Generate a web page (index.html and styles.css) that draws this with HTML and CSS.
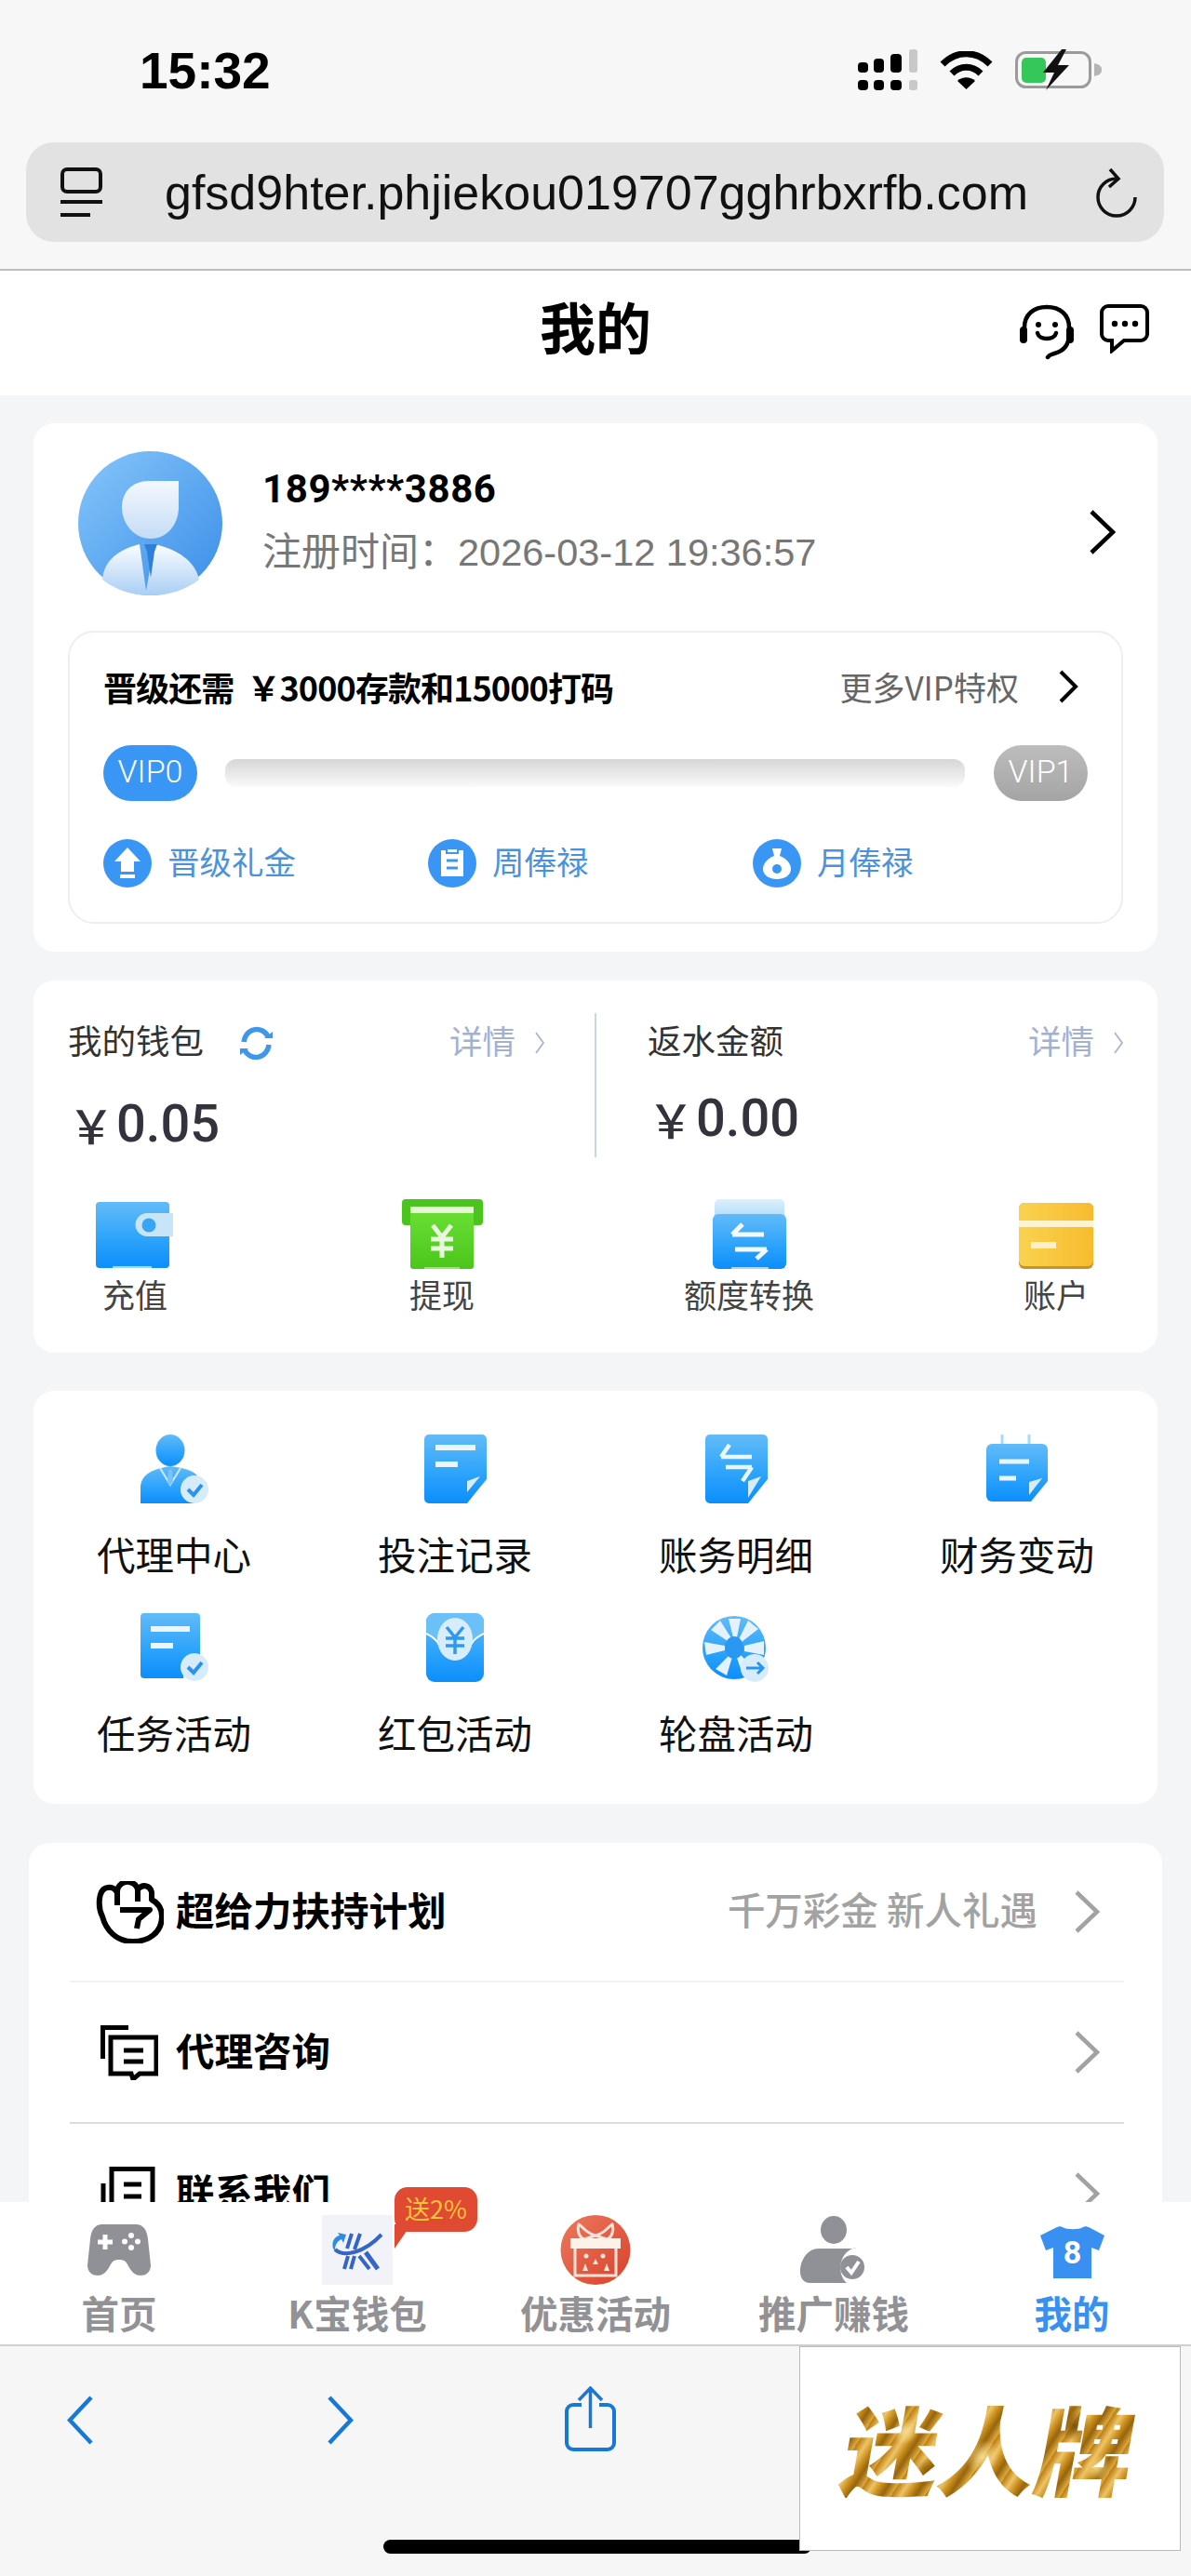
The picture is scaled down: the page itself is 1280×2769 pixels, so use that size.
FILE: index.html
```html
<!DOCTYPE html>
<html lang="zh-CN">
<head>
<meta charset="utf-8">
<title>我的</title>
<link rel="stylesheet" href="styles.css">
</head>
<body>
<svg class="defs" aria-hidden="true"><defs>
<linearGradient id="gBlue" x1="0" y1="0" x2="0" y2="1"><stop offset="0" stop-color="#62bbf8"/><stop offset=".55" stop-color="#2ea4fb"/><stop offset="1" stop-color="#0c8efb"/></linearGradient>
<linearGradient id="gGreen" x1="0" y1="0" x2="0" y2="1"><stop offset="0" stop-color="#68de34"/><stop offset="1" stop-color="#4cc61c"/></linearGradient>
<linearGradient id="gPale" x1="0" y1="0" x2="0" y2="1"><stop offset="0" stop-color="#dcf0fc"/><stop offset="1" stop-color="#a6d8fa"/></linearGradient>
<linearGradient id="gYellow" x1="0" y1="0" x2="1" y2="0"><stop offset="0" stop-color="#fad24f"/><stop offset="1" stop-color="#f7bb2e"/></linearGradient>
<linearGradient id="gAvatar" x1="0" y1="0" x2="1" y2="1"><stop offset="0" stop-color="#86c6fa"/><stop offset="1" stop-color="#3a8de8"/></linearGradient>
<linearGradient id="gHead" x1="0" y1="0" x2="0" y2="1"><stop offset="0" stop-color="#f4f8fd"/><stop offset="1" stop-color="#c4dcf6"/></linearGradient>
<linearGradient id="gBody" x1="0" y1="0" x2="0" y2="1"><stop offset="0" stop-color="#fbfdff"/><stop offset="1" stop-color="#a9cef5"/></linearGradient>
<linearGradient id="gGift" x1="0" y1="0" x2="1" y2="1"><stop offset="0" stop-color="#ec7a5e"/><stop offset="1" stop-color="#d8412b"/></linearGradient>
</defs></svg>

<header class="chrome">
  <div class="status">
    <span class="time">15:32</span>
    <div class="status-icons">
      <svg class="signal" width="64" height="45" viewBox="0 0 64 45"><g fill="#000"><rect x="0" y="14" width="11" height="11" rx="4"/><rect x="17" y="10" width="11" height="15" rx="4"/><rect x="35" y="5" width="12" height="20" rx="4"/><rect x="0" y="33" width="11" height="11" rx="4"/><rect x="17" y="33" width="11" height="11" rx="4"/><rect x="35" y="33" width="12" height="11" rx="4"/></g><g fill="#c8c8c8"><rect x="55" y="0" width="9" height="25" rx="3"/><rect x="55" y="33" width="9" height="11" rx="3"/></g></svg>
      <svg class="wifi" width="57" height="41" viewBox="0 0 57 41"><g fill="none" stroke="#000" stroke-width="7"><path d="M3 14C18 -1 39 -1 54 14"/><path d="M13 24C22 15 35 15 44 24"/></g><path d="M19 32C24 27 33 27 38 32L28.500 41Z" fill="#000"/></svg>
      <svg class="battery" width="93" height="44" viewBox="0 0 93 44"><rect x="1.500" y="3.500" width="79" height="37" rx="10" fill="none" stroke="#9b9b9b" stroke-width="3"/><rect x="7" y="9" width="26" height="27" rx="5" fill="#35c759"/><path d="M85 15c5 1 8 3 8 7s-3 6-8 7z" fill="#b5b5b5"/><path d="M50 0L30 25H42L33 44L58 17H46L55 0Z" fill="#111"/></svg>
    </div>
  </div>
  <div class="urlbar">
    <svg class="url-tabs" width="45" height="53" viewBox="0 0 45 53"><rect x="2" y="2" width="41" height="24" rx="5" fill="none" stroke="#111" stroke-width="4"/><path d="M0 37H45M0 51H32" stroke="#111" stroke-width="4"/></svg>
    <span class="url-text">gfsd9hter.phjiekou019707gghrbxrfb.com</span>
    <svg class="reload" width="44" height="54" viewBox="0 0 44 54"><path d="M22 12A20 20 0 1 0 42 32" fill="none" stroke="#111" stroke-width="3.500"/><path d="M15 2L24 12L14 21" fill="none" stroke="#111" stroke-width="3.500"/></svg>
  </div>
</header>

<main class="scroll">
  <div class="titlebar">
    <h1 class="title">我的</h1>
    <div class="title-icons">
      <svg width="60" height="60" viewBox="0 0 60 60"><g fill="none" stroke="#000" stroke-width="4.500" stroke-linecap="round"><path d="M6 34V25C6 11 16 3 30 3S54 11 54 25V34"/><path d="M54 32C54 42 50 50 38 53C36 54 33 54 31 57"/><path d="M20 31C22 39 38 39 40 31"/></g><rect x="1" y="24" width="8" height="18" rx="4"/><rect x="51" y="24" width="8" height="18" rx="4"/><circle cx="21" cy="22" r="3"/><circle cx="39" cy="22" r="3"/></svg>
      <svg width="53" height="53" viewBox="0 0 53 53"><path d="M9 2H44A7 7 0 0 1 51 9V32A7 7 0 0 1 44 39H26L13 50V39H9A7 7 0 0 1 2 32V9A7 7 0 0 1 9 2Z" fill="none" stroke="#000" stroke-width="4"/><circle cx="16" cy="21" r="3.200"/><circle cx="27" cy="21" r="3.200"/><circle cx="38" cy="21" r="3.200"/></svg>
    </div>
  </div>

  <section class="card card-user">
    <div class="profile">
      <svg class="avatar" width="155" height="155" viewBox="0 0 155 155"><circle cx="77.500" cy="77.500" r="77.500" fill="url(#gAvatar)"/><path d="M108 32V60C108 78 96 94 78 94C60 94 47 78 47 60C47 44 58 32 76 32Z" fill="url(#gHead)"/><path d="M26 138C28 118 42 106 66 100L73 150L82 100C106 105 126 118 130 138C116 149 97 155 78 155C58 155 40 149 26 138Z" fill="url(#gBody)"/><path d="M71 100H85L82 108L78 136L74 108Z" fill="#2f7fd8"/></svg>
      <div class="who">
        <div class="phone">189****3886</div>
        <div class="regtime"><span class="reg-label">注册时间：</span>2026-03-12 19:36:57</div>
      </div>
      <svg class="chev-user" width="29" height="48" viewBox="0 0 29 48"><path d="M3 2L26 24L3 46" fill="none" stroke="#000" stroke-width="4.500"/></svg>
    </div>
    <div class="vip">
      <div class="vip-head">
        <div class="vip-need"><span>晋级还需</span><span class="yen-s">￥</span><span>3000存款和15000打码</span></div>
        <div class="vip-more"><span>更多VIP特权</span><svg width="21" height="36" viewBox="0 0 21 36"><path d="M2 2L18 18L2 34" fill="none" stroke="#000" stroke-width="4"/></svg></div>
      </div>
      <div class="vip-progress">
        <span class="pill pill-on">VIP0</span>
        <div class="bar"></div>
        <span class="pill pill-off">VIP1</span>
      </div>
      <div class="vip-links">
        <div class="vip-link"><svg width="52" height="52" viewBox="0 0 52 52"><circle cx="26" cy="26" r="26" fill="#3a96f5"/><path d="M26 9L40 24H33V35H19V24H12Z" fill="#fff"/><rect x="18" y="38" width="16" height="4" fill="#fff"/></svg><span>晋级礼金</span></div>
        <div class="vip-link"><svg width="52" height="52" viewBox="0 0 52 52"><circle cx="26" cy="26" r="26" fill="#3a96f5"/><path d="M14 12H38V40H14Z" fill="#fff"/><path d="M20 10H32V15H20Z" fill="#fff" stroke="#3a96f5" stroke-width="2"/><path d="M20 23H32M20 31H32" stroke="#3a96f5" stroke-width="3"/></svg><span>周俸禄</span></div>
        <div class="vip-link"><svg width="52" height="52" viewBox="0 0 52 52"><circle cx="26" cy="26" r="26" fill="#3a96f5"/><path d="M21 10H31L29 18C37 21 41 27 41 32C41 39 34 43 26 43S11 39 11 32C11 27 15 21 23 18Z" fill="#fff"/><circle cx="26" cy="32" r="5" fill="#3a96f5"/></svg><span>月俸禄</span></div>
      </div>
    </div>
  </section>

  <section class="card card-wallet">
    <div class="wallet-top">
      <div class="wallet-col wallet-left">
        <div class="w-head">
          <span class="w-name">我的钱包</span>
          <svg class="w-refresh" width="37" height="37" viewBox="0 0 37 37"><g fill="none" stroke="#3f97ea" stroke-width="5.500"><path d="M5 17A14 15 0 0 1 31 11"/><path d="M32 20A14 15 0 0 1 6 26"/></g><path d="M27 13H36V6Z M10 24H1V31Z" fill="#3f97ea"/></svg>
          <span class="w-detail">详情</span>
          <svg class="w-chev" width="11" height="24" viewBox="0 0 11 24"><path d="M1 1L9 12L1 23" fill="none" stroke="#aab4ce" stroke-width="1.800"/></svg>
        </div>
        <div class="amount"><span class="yen">￥</span><span>0.05</span></div>
      </div>
      <div class="wallet-col wallet-right">
        <div class="w-head">
          <span class="w-name">返水金额</span>
          <span class="w-detail">详情</span>
          <svg class="w-chev" width="11" height="24" viewBox="0 0 11 24"><path d="M1 1L9 12L1 23" fill="none" stroke="#aab4ce" stroke-width="1.800"/></svg>
        </div>
        <div class="amount"><span class="yen">￥</span><span>0.00</span></div>
      </div>
    </div>
    <div class="wallet-actions">
      <div class="w-action">
        <svg width="84" height="75" viewBox="0 0 84 75"><rect x="0" y="3" width="79" height="71" rx="4" fill="url(#gBlue)"/><path d="M18 73H60" stroke="#9ddaff" stroke-width="2"/><path d="M83 15H55A12.500 12.500 0 0 0 55 40H83Z" fill="#c8e4f8"/><circle cx="57" cy="28" r="7.500" fill="#38a4f5"/></svg>
        <span>充值</span>
      </div>
      <div class="w-action">
        <svg width="87" height="75" viewBox="0 0 87 75"><rect x="0" y="0" width="87" height="28" rx="4" fill="#4bc51e"/><rect x="9" y="14" width="68" height="61" rx="3" fill="url(#gGreen)"/><rect x="9" y="8" width="68" height="7" fill="#e6f7d6"/><path d="M33 28L43 41L53 28M31 43H55M31 53H55M43 41V63" fill="none" stroke="#e9f8dc" stroke-width="5"/><path d="M24 74H62" stroke="#8fe868" stroke-width="2"/></svg>
        <span>提现</span>
      </div>
      <div class="w-action">
        <svg width="79" height="75" viewBox="0 0 79 75"><rect x="2" y="0" width="75" height="24" rx="5" fill="url(#gPale)"/><rect x="0" y="16" width="79" height="59" rx="6" fill="url(#gBlue)"/><path d="M21 38H55M21 38L32 27M58 54H24M58 54L47 64" fill="none" stroke="#f2f9ff" stroke-width="5"/><path d="M20 74H60" stroke="#9ddaff" stroke-width="2"/></svg>
        <span>额度转换</span>
      </div>
      <div class="w-action">
        <svg width="80" height="75" viewBox="0 0 80 75"><rect x="0" y="4" width="80" height="71" rx="6" fill="#c4952f"/><rect x="0" y="4" width="80" height="68" rx="6" fill="url(#gYellow)"/><rect x="0" y="23" width="80" height="7" fill="#fdf3cf"/><rect x="13" y="46" width="27" height="7" fill="#fdf0c8"/></svg>
        <span>账户</span>
      </div>
    </div>
  </section>

  <section class="card card-menu">
    <div class="menu-cell">
      <svg width="73" height="74" viewBox="0 0 73 74"><path d="M32 34C14 37 0 42 0 58V74H58A15 15 0 0 1 62 46C58 38 45 36 32 34Z" fill="url(#gBlue)"/><ellipse cx="32" cy="17" rx="15.500" ry="17" fill="url(#gBlue)"/><path d="M21 36L32 54L43 36" fill="none" stroke="#cfe9fb" stroke-width="2"/><path d="M30 38H34L35 50L32 55L29 50Z" fill="#7cc2f7"/><circle cx="58" cy="59" r="15" fill="#d6ecfb"/><path d="M51 59L57 65L66 54" fill="none" stroke="#2a93f0" stroke-width="4"/></svg>
      <span>代理中心</span>
    </div>
    <div class="menu-cell">
      <svg width="67" height="74" viewBox="0 0 67 74"><path d="M5 0H62A5 5 0 0 1 67 5V48L46 74H5A5 5 0 0 1 0 69V5A5 5 0 0 1 5 0Z" fill="url(#gBlue)"/><path d="M12 14H55M12 32H36" stroke="#eaf6fe" stroke-width="6"/><path d="M60 45L46 50V62Z" fill="#d6ecfb"/></svg>
      <span>投注记录</span>
    </div>
    <div class="menu-cell">
      <svg width="67" height="74" viewBox="0 0 67 74"><path d="M5 0H62A5 5 0 0 1 67 5V48L46 74H5A5 5 0 0 1 0 69V5A5 5 0 0 1 5 0Z" fill="url(#gBlue)"/><path d="M17 24H50M17 24L26 11M50 35H22M50 35L40 50" fill="none" stroke="#eaf6fe" stroke-width="4.500"/><path d="M60 45L46 50V68Z" fill="#d6ecfb"/></svg>
      <span>账务明细</span>
    </div>
    <div class="menu-cell">
      <svg width="66" height="74" viewBox="0 0 66 74"><path d="M17 0V16M46 0V16" stroke="#a7dbfb" stroke-width="3"/><path d="M6 10H60A6 6 0 0 1 66 16V50L48 72H6A6 6 0 0 1 0 66V16A6 6 0 0 1 6 10Z" fill="url(#gBlue)"/><path d="M14 29H46M14 47H32" stroke="#eaf6fe" stroke-width="5"/><path d="M60 47L46 51V65Z" fill="#d6ecfb"/></svg>
      <span>财务变动</span>
    </div>
    <div class="menu-cell">
      <svg width="73" height="74" viewBox="0 0 73 74"><path d="M4 0H60A4 4 0 0 1 64 4V60H46V70H4A4 4 0 0 1 0 66V4A4 4 0 0 1 4 0Z" fill="url(#gBlue)"/><path d="M11 17H53M11 35H35" stroke="#eaf6fe" stroke-width="6"/><circle cx="58" cy="58" r="15" fill="#d6ecfb"/><path d="M51 58L57 64L66 53" fill="none" stroke="#2a93f0" stroke-width="4"/></svg>
      <span>任务活动</span>
    </div>
    <div class="menu-cell">
      <svg width="62" height="74" viewBox="0 0 62 74"><rect x="0" y="0" width="62" height="74" rx="9" fill="url(#gBlue)"/><path d="M0 22C8 26 12 32 16 38H46C50 32 54 26 62 22V9A9 9 0 0 0 53 0H9A9 9 0 0 0 0 9Z" fill="#6cc0f8"/><path d="M0 22C8 26 12 30 14 34M62 22C54 26 50 30 48 34" fill="none" stroke="#fff" stroke-width="2"/><ellipse cx="31" cy="28" rx="19" ry="23" fill="#d8edfb"/><path d="M22 15L31 26L40 15M21 27H41M21 35H41M31 26V44" fill="none" stroke="#2f98f0" stroke-width="3.500"/></svg>
      <span>红包活动</span>
    </div>
    <div class="menu-cell">
      <svg width="72" height="74" viewBox="0 0 72 74"><circle cx="34" cy="37" r="34" fill="url(#gBlue)"/><path d="M28 6H41L37 26H33ZM49 8L60 17L42 31L39 28ZM66 30L66 45L45 41V35ZM55 59L43 66L37 48L41 45ZM26 67L14 60L29 45L32 47ZM4 45L2 31L24 35V40ZM9 18L19 8L31 27L27 30Z" fill="#e3f2fc"/><ellipse cx="34" cy="37" rx="10" ry="12" fill="#2a98f2"/><circle cx="56" cy="59" r="15" fill="#d6ecfb"/><path d="M47 59H65M59 53L65 59L59 65" fill="none" stroke="#2a93f0" stroke-width="3"/></svg>
      <span>轮盘活动</span>
    </div>
  </section>

  <section class="card-list">
    <div class="row row-soft">
      <span class="row-icon"><svg width="73" height="67" viewBox="0 0 73 67"><g fill="none" stroke="#000" stroke-width="6" stroke-linejoin="round"><path d="M7 38C2 28 2 8 13 7C18 6 21 9 23 12C23 4 30 0 36 1C41 2 44 5 45 9C50 3 58 4 60 12L60 20C68 24 71 30 71 38C71 56 56 65 40 65C22 65 11 53 7 38Z"/><path d="M23 12V26M45 9V22"/><path d="M26 31H58L46 41L44 51"/></g></svg></span>
      <span class="row-text">超给力扶持计划</span>
      <span class="row-note">千万彩金 新人礼遇</span>
      <svg class="row-chev" width="27" height="46" viewBox="0 0 27 46"><path d="M2 2L24 23L2 44" fill="none" stroke="#a2a2a2" stroke-width="4.500"/></svg>
    </div>
    <div class="row row-hard">
      <span class="row-icon"><svg width="62" height="59" viewBox="0 0 62 59"><g fill="none" stroke="#000" stroke-width="5"><path d="M30 2.500H2.500V36"/><path d="M11 13H60V52H42L35 58L33 52H11Z"/><path d="M25 27H46M25 39H46"/></g></svg></span>
      <span class="row-text">代理咨询</span>
      <svg class="row-chev" width="27" height="46" viewBox="0 0 27 46"><path d="M2 2L24 23L2 44" fill="none" stroke="#a2a2a2" stroke-width="4.500"/></svg>
    </div>
    <div class="row">
      <span class="row-icon"><svg width="62" height="59" viewBox="0 0 62 59"><g fill="none" stroke="#000" stroke-width="5"><path d="M12 2.500H56V52H12Z"/><path d="M3 18V50H10"/><path d="M25 19H44M25 32H44"/></g></svg></span>
      <span class="row-text">联系我们</span>
      <svg class="row-chev" width="27" height="46" viewBox="0 0 27 46"><path d="M2 2L24 23L2 44" fill="none" stroke="#a2a2a2" stroke-width="4.500"/></svg>
    </div>
  </section>
</main>

<nav class="tabbar">
  <div class="tab">
    <svg width="68" height="75" viewBox="0 0 68 75"><path d="M16 10H52C60 10 64 16 65 26L68 54C68 62 62 65 57 65C51 65 47 61 43 53C41 49 38 48 34 48S27 49 25 53C21 61 17 65 11 65C6 65 0 62 0 54L3 26C4 16 8 10 16 10Z" fill="#909097"/><path d="M19 21V37M11 29H27" stroke="#fff" stroke-width="5"/><g fill="#fff"><circle cx="47" cy="22" r="3"/><circle cx="47" cy="35" r="3"/><circle cx="40" cy="28.500" r="3"/><circle cx="54" cy="28.500" r="3"/></g></svg>
    <span>首页</span>
  </div>
  <div class="tab">
    <svg width="76" height="75" viewBox="0 0 76 75"><rect width="76" height="75" fill="#f2f3f8"/><g fill="none" stroke="#3565c9"><path d="M32 20L27 36M41 20L35 37" stroke-width="4"/><path d="M14 37C24 46 46 40 64 21" stroke-width="4"/><path d="M28 44L24 58M35 44L31 58M40 44L51 58" stroke-width="4"/><path d="M47 40L60 58" stroke-width="5"/></g><path d="M12 36C10 28 14 23 19 22L17 19L26 21L23 30L21 26C17 28 14 31 14 38Z" fill="#2f8be0"/></svg>
    <span>K宝钱包</span>
    <div class="bubble"><span>送2%</span></div>
  </div>
  <div class="tab">
    <svg width="76" height="75" viewBox="0 0 76 75"><circle cx="38" cy="37.500" r="37.500" fill="url(#gGift)"/><g fill="none" stroke="#fbe3da" stroke-width="3"><path d="M38 22C28 20 24 12 20 10C18 16 20 24 26 26Z"/><path d="M38 22C48 20 52 12 56 10C58 16 56 24 50 26Z"/><path d="M16 36V65H60V36"/></g><rect x="11" y="25" width="54" height="11" fill="#fdf1ea"/><g fill="#fbe3da"><circle cx="28" cy="44" r="2.500"/><circle cx="46" cy="44" r="2.500"/><path d="M38 47L41 53H35Z"/><path d="M27 52L30 60H24Z"/><path d="M50 52L53 60H47Z"/></g></svg>
    <span>优惠活动</span>
  </div>
  <div class="tab">
    <svg width="72" height="75" viewBox="0 0 72 75"><ellipse cx="36" cy="16" rx="14" ry="15" fill="#909097"/><path d="M20 36C8 36 0 48 0 61C0 68 4 73 10 73H50C42 66 40 50 50 40C54 36 58 35 60 36C54 36 40 36 20 36Z" fill="#909097"/><circle cx="56" cy="56" r="13" fill="#909097"/><path d="M50 56L55 62L63 50" fill="none" stroke="#fff" stroke-width="4"/></svg>
    <span>推广赚钱</span>
  </div>
  <div class="tab">
    <svg width="69" height="75" viewBox="0 0 69 75"><path d="M16 14C20 12 22 12 24 13C28 16 42 16 46 13C48 12 50 12 54 14L69 22L63 38L55 35V68H14V35L6 38L0 22Z" fill="#3a90f0"/><text class="shirt-num" x="34.500" y="52">8</text></svg>
    <span class="tab-on">我的</span>
  </div>
</nav>

<footer class="safari">
  <svg class="sf-back" width="29" height="53" viewBox="0 0 29 53"><path d="M26 2L3 26.500L26 51" fill="none" stroke="#1878d8" stroke-width="4.500"/></svg>
  <svg class="sf-fwd" width="29" height="53" viewBox="0 0 29 53"><path d="M3 2L26 26.500L3 51" fill="none" stroke="#1878d8" stroke-width="4.500"/></svg>
  <svg class="sf-share" width="55" height="70" viewBox="0 0 55 70"><path d="M18 20H9A7 7 0 0 0 2 27V61A7 7 0 0 0 9 68H46A7 7 0 0 0 53 61V27A7 7 0 0 0 46 20H37" fill="none" stroke="#1878d8" stroke-width="4"/><path d="M27.500 45V2M15 15L27.500 2L40 15" fill="none" stroke="#1878d8" stroke-width="3.500"/></svg>
  <div class="homebar"></div>
  <aside class="ad"><span class="ad-text">迷人牌</span></aside>
</footer>
</body>
</html>
```
FILE: styles.css
```css
* { box-sizing: border-box; }
html, body { margin: 0; padding: 0; }
body {
  width: 1280px;
  height: 2769px;
  overflow: hidden;
  display: flex;
  flex-direction: column;
  background: #f3f5f7;
  font-family: "Liberation Sans", "Noto Sans CJK SC", sans-serif;
  color: #000;
}
svg { display: block; flex: none; }
.defs { position: absolute; width: 0; height: 0; }

/* browser chrome */
.chrome { height: 291px; flex: none; background: #f7f7f7; border-bottom: 2px solid #bdbdbd; }
.status { height: 153px; position: relative; display: flex; align-items: flex-start; padding: 46px 96px 0 150px; justify-content: space-between; }
.time { font-size: 55px; line-height: 60px; font-weight: 700; }
.status-icons { display: flex; align-items: flex-start; padding-top: 7px; }
.wifi { margin: 2px 0 0 24px; }
.battery { margin-left: 24px; }
.urlbar { height: 107px; margin: 0 29px 0 28px; background: #e2e2e2; border-radius: 30px; display: flex; align-items: center; padding: 0 29px 0 37px; }
.url-text { font-size: 52px; line-height: 60px; margin-left: 67px; flex: 1; color: #111; white-space: nowrap; }

/* page */
.scroll { flex: 1; min-height: 0; overflow: hidden; }
.titlebar { height: 134px; background: #fff; position: relative; display: flex; align-items: center; justify-content: center; }
.title { margin: 0 0 16px; font-size: 60px; font-weight: 700; line-height: 70px; font-family: "Noto Sans CJK SC", sans-serif; }
.title-icons { position: absolute; right: 45px; top: 36px; display: flex; align-items: flex-start; gap: 27px; }
.card { background: #fff; border-radius: 22px; margin: 0 36px; }

.card-user { margin-top: 30px; height: 568px; padding: 30px 37px 0 37px; }
.profile { display: flex; align-items: flex-start; padding-left: 11px; height: 155px; }
.who { margin-left: 43px; flex: 1; }
.phone { font-family: Roboto, "Noto Sans CJK SC", sans-serif; font-size: 42px; line-height: 46px; font-weight: 700; margin-top: 18px; letter-spacing: .6px; }
.regtime { font-size: 41.500px; line-height: 50px; margin-top: 16px; color: #777; font-family: "Liberation Sans", sans-serif; }
.reg-label { font-family: "Noto Sans CJK SC", sans-serif; font-size: 42px; }
.chev-user { margin: 63px 8px 0 0; }

.vip { margin-top: 38px; height: 315px; border: 2px solid #eceeef; border-radius: 28px; padding: 0 36px 0 36px; }
.vip-head { display: flex; justify-content: space-between; align-items: center; height: 61px; margin-top: 27px; }
.vip-need { font-size: 36px; font-weight: 700; font-family: "Noto Sans CJK SC", sans-serif; display: flex; letter-spacing: -.9px; }
.yen-s { margin-left: 14px; }
.vip-more { display: flex; align-items: center; font-size: 35px; color: #666; font-family: "Noto Sans CJK SC", sans-serif; }
.vip-more svg { margin-left: 43px; margin-right: 10px; }
.vip-progress { display: flex; align-items: center; margin-top: 33px; height: 60px; }
.pill { width: 101px; height: 60px; border-radius: 30px; color: #fff; font-family: Roboto, sans-serif; font-weight: 300; font-size: 34px; line-height: 56px; text-align: center; flex: none; }
.pill-on { background: #3a96f5; }
.pill-off { background: linear-gradient(#bdbdbd, #a4a4a4); margin-left: 31px; }
.bar { flex: 1; height: 30px; margin-left: 30px; border-radius: 12px; background: linear-gradient(#d6d6d6, #fafafa); }
.vip-links { display: flex; margin-top: 41px; }
.vip-link { display: flex; align-items: center; width: 349px; color: #4a93dc; font-size: 34.500px; font-family: "Noto Sans CJK SC", sans-serif; gap: 17px; }
.vip-link span { margin-top: -6px; }

.card-wallet { margin-top: 31px; height: 400px; padding-top: 35px; }
.wallet-top { display: flex; height: 155px; }
.wallet-col { width: 604px; flex: none; }
.wallet-left { padding: 0 53px 0 37px; border-right: 2px solid #ccd5e2; width: 605px; }
.wallet-right { padding: 0 37px 0 55px; }
.w-head { display: flex; align-items: center; height: 64px; }
.w-name { font-family: "Noto Sans CJK SC", sans-serif; font-size: 36.500px; line-height: 46px; color: #333; padding-bottom: 6px; }
.w-refresh { margin-left: 38px; }
.w-detail { font-family: "Noto Sans CJK SC", sans-serif; font-size: 35.500px; line-height: 46px; color: #a5b0cf; margin-left: auto; padding-bottom: 6px; }
.w-chev { margin-left: 21px; }
.amount { font-family: Roboto, sans-serif; font-size: 56px; line-height: 52px; font-weight: 500; color: #33333d; margin-top: 29px; display: flex; align-items: center; }
.wallet-right .amount { margin-top: 23px; }
.yen { font-family: "Noto Sans CJK SC", sans-serif; font-size: 50px; font-weight: 500; margin-right: 2px; }
.wallet-actions { display: flex; justify-content: space-between; padding: 0 39px; margin-top: 45px; }
.w-action { width: 140px; display: flex; flex-direction: column; align-items: center; font-family: "Noto Sans CJK SC", sans-serif; font-size: 35px; line-height: 40px; color: #444; }
.w-action span { margin-top: 7px; white-space: nowrap; }

.card-menu { margin-top: 41px; height: 444px; padding-top: 47px; display: grid; grid-template-columns: repeat(4, 302px); grid-auto-rows: 153px; row-gap: 39px; }
.menu-cell { display: flex; flex-direction: column; align-items: center; font-family: "Noto Sans CJK SC", sans-serif; font-size: 41.500px; line-height: 44px; color: #111; }
.menu-cell span { margin-top: 32px; }

.card-list { margin: 42px 31px 0; background: #fff; border-radius: 22px; padding: 0 41px 0 44px; }
.row { display: flex; align-items: center; height: 150px; padding: 0 26px 0 24px; }
.row-soft { height: 150px; border-bottom: 2px solid #f3f3f3; }
.row-hard { height: 152px; border-bottom: 2px solid #dcdcdc; }
.row-icon { width: 80px; margin-right: 10px; display: flex; justify-content: center; }
.row-text { font-family: "Noto Sans CJK SC", sans-serif; font-size: 41.500px; font-weight: 700; line-height: 50px; flex: 1; padding-bottom: 6px; }
.row-note { font-family: "Noto Sans CJK SC", sans-serif; font-size: 40.500px; font-weight: 500; line-height: 50px; color: #a2a2a2; margin-right: 40px; padding-bottom: 6px; }

/* app tab bar */
.tabbar { height: 155px; flex: none; background: #fff; border-bottom: 2px solid #cfcfcf; display: grid; grid-template-columns: repeat(5, 256px); position: relative; }
.tab { position: relative; display: flex; flex-direction: column; align-items: center; padding-top: 14px; font-family: "Noto Sans CJK SC", sans-serif; font-size: 40.500px; font-weight: 700; line-height: 44px; color: #929296; }
.tab > span { margin-top: 8px; white-space: nowrap; }
.tab .tab-on { color: #3a90f0; }
.bubble { position: absolute; left: 168px; top: -16px; width: 89px; height: 48px; border-radius: 14px; background: #e04a33; color: #ffc53a; font-size: 27px; font-weight: 400; line-height: 46px; text-align: center; }
.bubble::after { content: ""; position: absolute; left: 0; top: 40px; border-right: 18px solid transparent; border-top: 26px solid #e04a33; }
.shirt-num { font-family: Roboto, sans-serif; font-size: 34px; font-weight: 700; fill: #fff; text-anchor: middle; }

/* safari bottom */
.safari { height: 247px; flex: none; position: relative; background: #f6f6f6; display: flex; align-items: flex-start; padding: 43px 0 0 72px; }
.sf-back { margin-top: 10px; }
.sf-fwd { margin: 10px 0 0 250px; }
.sf-share { margin-left: 227px; }
.homebar { position: absolute; left: 412px; top: 208px; width: 460px; height: 15px; background: #000; border-radius: 8px; }
.ad { position: absolute; left: 859px; top: 0; width: 410px; height: 220px; background: #fff; border: 1px solid #bbb; display: flex; align-items: center; justify-content: center; }
.ad-text {
  font-family: "Noto Sans CJK SC", sans-serif;
  font-size: 104px;
  font-weight: 900;
  line-height: 110px;
  margin-top: -5px;
  transform: skewX(-10deg);
  color: transparent;
  background:
    radial-gradient(circle at 20% 35%, #f7dc8c 0, transparent 14px),
    radial-gradient(circle at 48% 60%, #f5d98a 0, transparent 18px),
    radial-gradient(circle at 78% 30%, #7d5208 0, transparent 16px),
    radial-gradient(circle at 88% 70%, #f3d27a 0, transparent 14px),
    radial-gradient(circle at 30% 75%, #8a5b0a 0, transparent 16px),
    repeating-linear-gradient(115deg, #b97a10 0, #eec566 9px, #c88d1c 17px, #96640e 24px, #e3ae3e 33px);
  -webkit-background-clip: text;
  background-clip: text;
}
```
